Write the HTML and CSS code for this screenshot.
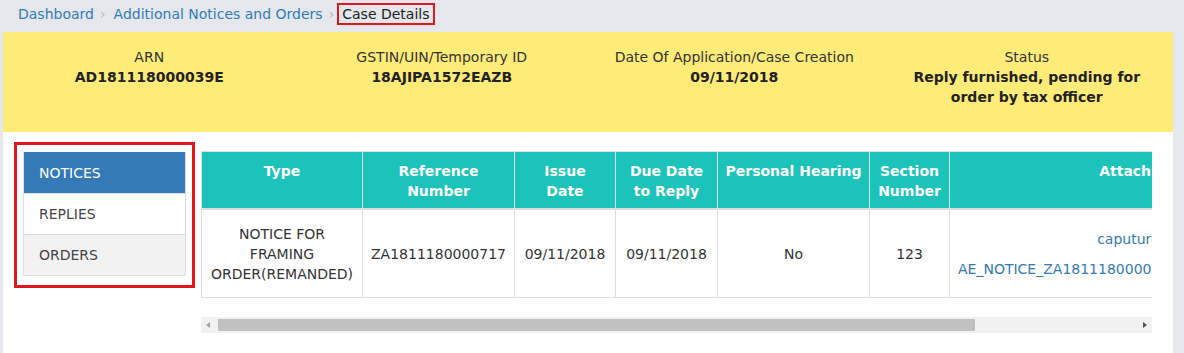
FILE: index.html
```html
<!DOCTYPE html>
<html lang="en">
<head>
  <meta charset="UTF-8" /><meta name="viewport" content="width=device-width, initial-scale=1.0" />
  <title>Case Details</title>
  <link rel="stylesheet" href="styles.css">
</head>
<body>
  <ol class="breadcrumb">
    <li><a href="#">Dashboard</a></li>
    <li><a href="#">Additional Notices and Orders</a></li>
    <li class="current"><span>Case Details</span></li>
  </ol>

  <div class="case-panel">
    <div class="summary">
      <div class="summary-item">
        <p class="label">ARN</p>
        <p class="value">AD181118000039E</p>
      </div>
      <div class="summary-item">
        <p class="label">GSTIN/UIN/Temporary ID</p>
        <p class="value">18AJIPA1572EAZB</p>
      </div>
      <div class="summary-item">
        <p class="label">Date Of Application/Case Creation</p>
        <p class="value">09/11/2018</p>
      </div>
      <div class="summary-item">
        <p class="label">Status</p>
        <p class="value status">Reply furnished, pending for order by tax officer</p>
      </div>
    </div>

    <div class="content">
      <div class="nav-box">
        <ul class="side-nav">
          <li class="active">NOTICES</li>
          <li>REPLIES</li>
          <li class="muted">ORDERS</li>
        </ul>
      </div>

      <div class="table-area">
        <div class="table-scroll">
          <table class="notices">
            <colgroup>
              <col style="width:161px"><col style="width:152px"><col style="width:101px"><col style="width:102px">
              <col style="width:152px"><col style="width:80px"><col style="width:392px">
            </colgroup>
            <thead>
              <tr>
                <th>Type</th>
                <th>Reference Number</th>
                <th class="tight">Issue Date</th>
                <th>Due Date to Reply</th>
                <th>Personal Hearing</th>
                <th>Section Number</th>
                <th>Attachment</th>
              </tr>
            </thead>
            <tbody>
              <tr>
                <td>NOTICE FOR FRAMING ORDER(REMANDED)</td>
                <td>ZA1811180000717</td>
                <td>09/11/2018</td>
                <td>09/11/2018</td>
                <td>No</td>
                <td>123</td>
                <td class="files">
                  <a href="#">caputure.PNG</a>
                  <a href="#">AE_NOTICE_ZA1811180000717_NOTICE_0911181.pdf</a>
                </td>
              </tr>
            </tbody>
          </table>
        </div>
        <div class="fake-scrollbar">
          <span class="arrow left"></span>
          <span class="thumb"></span>
          <span class="arrow right"></span>
        </div>
      </div>
    </div>
  </div>
</body>
</html>
```

FILE: styles.css
```css
body { margin:0; background:#e4e7eb; font-family:"DejaVu Sans", Verdana, sans-serif; font-size:14px; color:#333; }
a { color:#337ab7; text-decoration:none; }

.breadcrumb { list-style:none; margin:0; padding:3px 0 0 18px; height:32px; box-sizing:border-box; display:flex; align-items:flex-start; }
.breadcrumb li { display:flex; align-items:center; line-height:18px; height:22px; }
.breadcrumb li + li:before { content:"\203A"; color:#bbb; padding:0 8px 0 6px; }
.breadcrumb li.current:before { padding-right:3px; }
.breadcrumb li.current span { border:2px solid #e3161d; padding:0 3px; color:#222; line-height:18px; }

.case-panel { margin:0 11px 0 3px; }
.summary { background:#ffeb78; display:grid; grid-template-columns:repeat(4, 1fr); height:100px; box-sizing:border-box; padding-top:15px; }
.summary-item { text-align:center; padding:0 15px; }
.summary-item p { margin:0; line-height:20px; }
.summary-item .value { font-weight:bold; color:#222; }
.summary-item .status { padding:0 12px; }

.content { background:#fff; display:flex; padding:10px 21px 19px 11px; min-height:221px; box-sizing:border-box; }

.nav-box { border:3px solid #e3161d; width:181px; height:146px; box-sizing:border-box; padding:7px 6px 0 6px; flex-shrink:0; }
.side-nav { list-style:none; margin:0; padding:0; border:1px solid #ddd; border-top:none; }
.side-nav li { height:40px; line-height:40px; padding-left:15px; color:#444; border-top:1px solid #ddd; background:#fff; }
.side-nav li.active { background:#337ab7; color:#fff; border-top-color:#337ab7; }
.side-nav li.muted { background:#f2f2f2; }

.table-area { margin-left:6px; flex:1; min-width:0; margin-top:9px; }
.table-scroll { overflow:hidden; }
.notices { border-collapse:collapse; table-layout:fixed; width:1140px; }
.notices th, .notices td { border:1px solid #ddd; text-align:center; }
.notices th { background:#1cc3ba; color:#fff; font-weight:bold; vertical-align:top; padding:9px 4px 7px; line-height:20px; border-bottom:2px solid #ddd; }
.notices th.tight { padding-left:12px; padding-right:12px; }
.notices td { padding:14px 8px 13px; line-height:20px; vertical-align:middle; }
.notices td.files a { display:block; line-height:20px; }
.notices td.files a + a { margin-top:10px; }

.fake-scrollbar { margin-top:19px; height:16px; background:#f1f1f1; position:relative; }
.fake-scrollbar .thumb { position:absolute; left:17px; top:2px; width:757px; height:12px; background:#c1c1c1; }
.fake-scrollbar .arrow { position:absolute; top:5px; width:0; height:0; border-top:3px solid transparent; border-bottom:3px solid transparent; }
.fake-scrollbar .arrow.left { left:5px; border-right:4px solid #a3a3a3; }
.fake-scrollbar .arrow.right { right:5px; border-left:4px solid #505050; }
```
